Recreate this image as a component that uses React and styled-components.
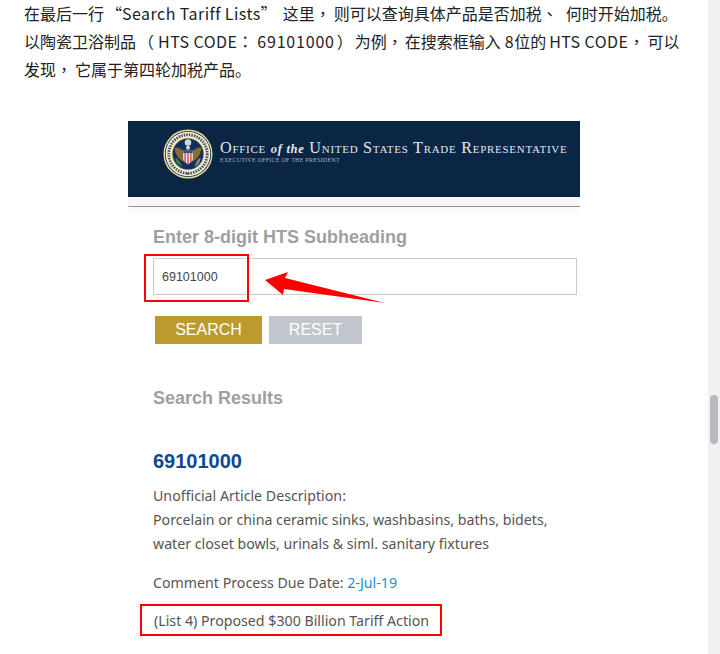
import React from "react";
import styled, { createGlobalStyle } from "styled-components";

const GlobalStyle = createGlobalStyle`
  html, body {
    margin: 0;
    padding: 0;
    background: #fff;
    overflow: hidden;
  }
`;

const Page = styled.div`
  display: flex;
  width: 720px;
  height: 654px;
  overflow: hidden;
`;

const Article = styled.div`
  width: 708px;
  padding: 0 0 0 24px;
  box-sizing: border-box;
`;

const Paragraph = styled.p`
  margin: -1px 0 38px;
  font-family: "Noto Sans CJK SC", "Noto Sans", sans-serif;
  font-size: 16px;
  line-height: 28px;
  color: #222;
  white-space: nowrap;
`;

// latin runs sit a little wider in the article text
const Latin = styled.span`
  letter-spacing: ${(props) => props.$ls || 0.45}px;
  margin-left: ${(props) => props.$l || 0}px;
`;

// full-width punctuation centred in its cell, with some air around it
const Punct = styled.span`
  font-family: "Noto Sans CJK TC", sans-serif;
  margin: 0 ${(props) => props.$r || 0}px 0 ${(props) => props.$l || 0}px;
`;

const Shot = styled.div`
  width: 452px;
  margin-left: 104px;
`;

const Banner = styled.div`
  display: flex;
  align-items: flex-start;
  gap: 7px;
  height: 76px;
  padding: 8px 0 0 35px;
  box-sizing: border-box;
  background: #0b2545;

  svg {
    flex-shrink: 0;
  }
`;

const BannerText = styled.div`
  padding-top: 11px;
  font-family: "Liberation Serif", serif;
  white-space: nowrap;
`;

const BannerTitle = styled.div`
  font-size: 16.2px;
  line-height: 16px;
  font-variant: small-caps;
  letter-spacing: 0.72px;
  color: #e4e8ee;

  em {
    font-variant: normal;
    font-size: 12.5px;
    font-weight: 700;
  }
`;

const BannerSub = styled.div`
  font-size: 6px;
  line-height: 7px;
  letter-spacing: 0.24px;
  color: #a9b3c1;
`;

const Rule = styled.div`
  height: 9px;
  background: #f7f7f7;
  border-bottom: 1px solid #8f8f8f;
  border-radius: 0 0 0 2px;
`;

const Form = styled.div`
  position: relative;
  padding: 19px 3px 0 25px;
  background: linear-gradient(#fafafa, #fff 12px);
`;

const SectionTitle = styled.h3`
  margin: 0;
  font-family: "Liberation Sans", Arial, sans-serif;
  font-size: 18px;
  line-height: 22px;
  font-weight: 700;
  color: #a0a0a0;
`;

const SearchInput = styled.div`
  height: 37px;
  margin-top: 10px;
  padding-left: 8px;
  box-sizing: border-box;
  border: 1px solid #ccc;
  background: #fff;
  font-family: "Liberation Sans", Arial, sans-serif;
  font-size: 12.5px;
  line-height: 37px;
  color: #444;
`;

const InputMark = styled.div`
  position: absolute;
  left: 16px;
  top: 47px;
  width: 105px;
  height: 48px;
  box-sizing: border-box;
  border: 2px solid #f00;
`;

const ArrowMark = styled.svg`
  position: absolute;
  left: 137px;
  top: 58px;
`;

const Buttons = styled.div`
  display: flex;
  gap: 7px;
  margin: 21px 0 0 2px;
`;

const Button = styled.div`
  width: ${(props) => props.$w}px;
  height: 28px;
  background: ${(props) => props.$bg};
  font-family: "Liberation Sans", Arial, sans-serif;
  font-size: 16px;
  line-height: 28px;
  text-align: center;
  color: #fff;
`;

const Results = styled(SectionTitle)`
  margin-top: 43px;
`;

const Code = styled.h2`
  margin: 40px 0 0;
  font-family: "Liberation Sans", Arial, sans-serif;
  font-size: 20px;
  line-height: 24px;
  font-weight: 700;
  color: #0b4a8f;
`;

const Body = styled.div`
  margin-top: ${(props) => props.$top}px;
  font-family: "Noto Sans", sans-serif;
  font-size: 14.2px;
  line-height: 24px;
  color: #555;
  white-space: nowrap;
`;

const DateLink = styled.span`
  color: #1a8fd0;
`;

const ListMark = styled.div`
  width: 302px;
  height: 32px;
  margin: 9px 0 0 -13px;
  padding-left: 12px;
  box-sizing: border-box;
  border: 2px solid #f00;
  font-family: "Noto Sans", sans-serif;
  font-size: 14.2px;
  line-height: 29px;
  color: #555;
  white-space: nowrap;
`;

const Track = styled.div`
  position: relative;
  width: 12px;
  height: 654px;
  background: #f1f1f1;
`;

const Thumb = styled.div`
  position: absolute;
  left: 2px;
  top: 395px;
  width: 8px;
  height: 49px;
  border-radius: 4px;
  background: #b9b9bf;
`;

const Seal = () => (
  <svg width="50" height="50" viewBox="0 0 52 52">
    <circle cx="26" cy="26" r="25.5" fill="#e9dc8f" />
    <circle cx="26" cy="26" r="24" fill="#0b2545" />
    <circle cx="26" cy="26" r="23.2" fill="#f2f0e2" />
    <circle cx="26" cy="26" r="17" fill="#e2c95a" />
    <circle cx="26" cy="26" r="16" fill="#12305c" />
    <circle cx="26" cy="26" r="20" fill="none" stroke="#4a4f55" strokeWidth="3" strokeDasharray="1.6 1.1" />
    <circle cx="26" cy="14" r="3.4" fill="#cfd8e0" />
    <path d="M12 20 C15 18 19 21 22 24 L22 34 C18 33 13 28 12 20 Z" fill="#8a6a35" />
    <path d="M40 20 C37 18 33 21 30 24 L30 34 C34 33 39 28 40 20 Z" fill="#8a6a35" />
    <path d="M13 30 C16 31 18 35 20 39 C16 38 13 35 13 30 Z" fill="#3d7d4e" />
    <path d="M39 30 C36 31 34 35 33 39 C36 38 39 35 39 30 Z" fill="#7d8ba0" />
    <path d="M21 22 H31 V31 C31 34 28 35 26 37 C24 35 21 34 21 31 Z" fill="#f1ece6" />
    <path d="M21 22 H31 V25 H21 Z" fill="#33508c" />
    <path d="M23 25 V35 M26 25 V37 M29 25 V35" stroke="#c23b3f" strokeWidth="1.3" />
    <circle cx="26" cy="19.5" r="2" fill="#e4dcc8" />
    <circle cx="26" cy="46.5" r="1" fill="#30343a" />
  </svg>
);

export default function App() {
  return (
    <Page>
      <GlobalStyle />
      <Article>
        <Paragraph>
          在最后一行<Punct $l={2}>“</Punct><Latin>Search Tariff Lists</Latin><Punct $r={6}>”</Punct>这里<Punct $r={3}>，</Punct>则可以查询具体产品是否加税<Punct $r={8}>、</Punct>何时开始加税。
          <br />
          以陶瓷卫浴制品<Punct $l={2} $r={4}>（</Punct><Latin>HTS CODE</Latin><Punct $r={4}>：</Punct><Latin $ls={0.8}>69101000</Latin><Punct $l={2} $r={2}>）</Punct>为例<Punct $r={2}>，</Punct>在搜索框输入<Latin $l={4}>8</Latin>位的<Latin $l={3}>HTS CODE</Latin><Punct $r={3}>，</Punct>可以
          <br />
          发现<Punct $r={3}>，</Punct>它属于第四轮加税产品。
        </Paragraph>
        <Shot>
          <Banner>
            <Seal />
            <BannerText>
              <BannerTitle>
                Office <em>of the</em> United States Trade Representative
              </BannerTitle>
              <BannerSub>EXECUTIVE OFFICE OF THE PRESIDENT</BannerSub>
            </BannerText>
          </Banner>
          <Rule />
          <Form>
            <SectionTitle>Enter 8-digit HTS Subheading</SectionTitle>
            <SearchInput>69101000</SearchInput>
            <InputMark />
            <ArrowMark width="122" height="40" viewBox="0 0 122 40">
              <path d="M0 15 L23 7 L20 13 L120 38 L19 24 L18 30 Z" fill="#f00" />
            </ArrowMark>
            <Buttons>
              <Button $w={107} $bg="#bd9a2d">SEARCH</Button>
              <Button $w={93} $bg="#c1c5cc">RESET</Button>
            </Buttons>
            <Results>Search Results</Results>
            <Code>69101000</Code>
            <Body $top={11}>
              Unofficial Article Description:
              <br />
              Porcelain or china ceramic sinks, washbasins, baths, bidets,
              <br />
              water closet bowls, urinals &amp; siml. sanitary fixtures
            </Body>
            <Body $top={15}>
              Comment Process Due Date: <DateLink>2-Jul-19</DateLink>
            </Body>
            <ListMark>(List 4) Proposed $300 Billion Tariff Action</ListMark>
          </Form>
        </Shot>
      </Article>
      <Track>
        <Thumb />
      </Track>
    </Page>
  );
}
